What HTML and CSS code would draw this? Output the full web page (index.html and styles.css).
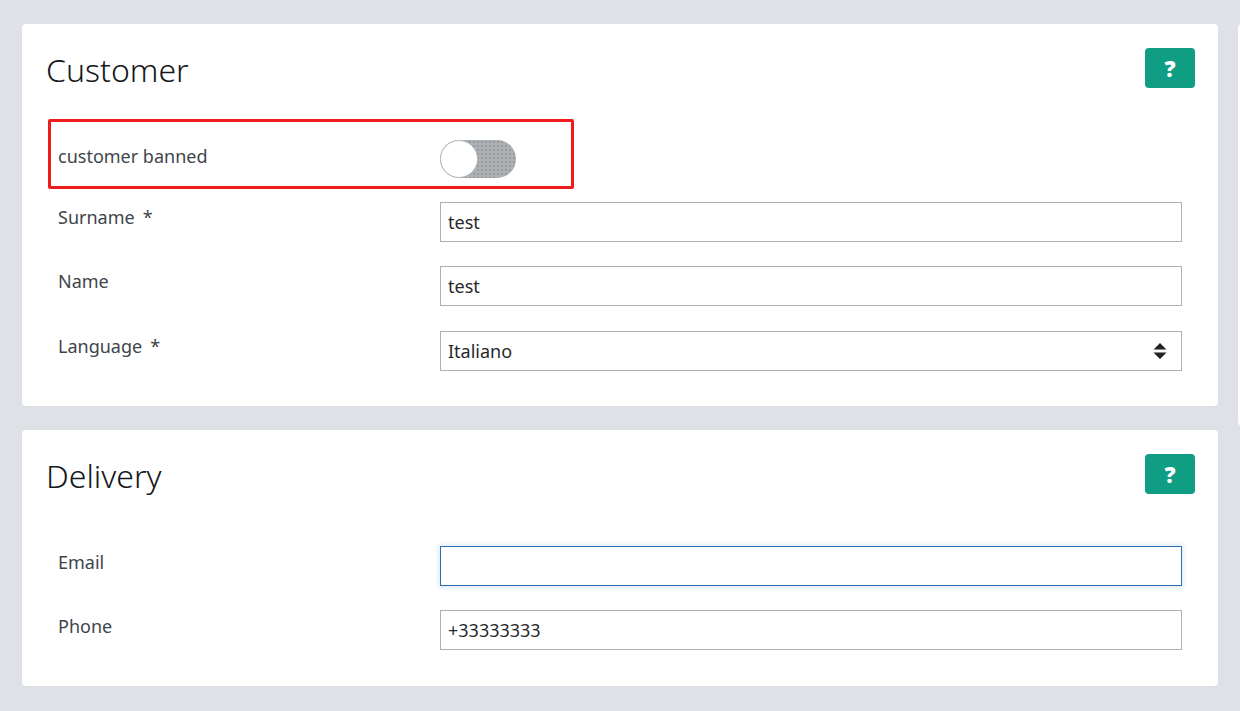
FILE: index.html
```html
<!DOCTYPE html>
<html lang="en">
<head>
<meta charset="utf-8">
<title>Customer</title>
<link rel="stylesheet" href="styles.css">
</head>
<body>
<div class="page">
  <main class="main">
    <section class="card card-customer">
      <header class="card-head">
        <h2>Customer</h2>
        <button class="help" type="button">?</button>
      </header>
      <div class="row row-banned">
        <span class="frame"></span>
        <label>customer banned</label>
        <div class="toggle"><span class="knob"></span></div>
      </div>
      <div class="row"><label>Surname<span class="star">*</span></label><div class="input">test</div></div>
      <div class="row"><label>Name</label><div class="input">test</div></div>
      <div class="row"><label>Language<span class="star">*</span></label>
        <div class="input select">Italiano
          <svg class="updown" viewBox="0 0 14 18" width="14" height="18"><path d="M7 1 L13.5 7.6 H0.5 Z M0.5 10.4 H13.5 L7 17 Z" fill="#222"/></svg>
        </div>
      </div>
    </section>
    <section class="card card-delivery">
      <header class="card-head">
        <h2>Delivery</h2>
        <button class="help" type="button">?</button>
      </header>
      <div class="row"><label>Email</label><div class="input focus"></div></div>
      <div class="row"><label>Phone</label><div class="input">+33333333</div></div>
    </section>
  </main>
  <aside class="side"></aside>
</div>
</body>
</html>
```
FILE: styles.css
```css
* { box-sizing: border-box; }
html, body { margin: 0; height: 100%; }
body {
  background: #dee2e6;
  color: #212529;
  font-family: "Noto Sans", "Open Sans", sans-serif;
  overflow: hidden;
}
.page { display: flex; gap: 20px; padding: 24px 0 0 22px; width: 1240px; height: 711px; overflow: hidden; }
.main { flex: 0 0 1196px; display: flex; flex-direction: column; gap: 24px; }
.side { flex: 0 0 100px; height: 402px; background: #fff; border-radius: 4px; }
.card { background: #fff; border-radius: 4px; padding: 24px; }
.card-customer { height: 382px; }
.card-delivery { height: 256px; }
.card-head { display: flex; justify-content: space-between; align-items: flex-start; height: 40px; }
.card-head h2 { margin: -1px 0 0 0; font-size: 32px; font-weight: 300; line-height: 46px; color: #14181b; }
.help {
  width: 50px; height: 40px; border: 0; border-radius: 4px; padding: 0; margin-right: -1px;
  background: #0f9d84; color: #fff;
  font: 900 22px/40px "Noto Sans", sans-serif;
}
.row {
  display: grid; grid-template-columns: 382px 1fr;
  padding: 0 12px; margin-bottom: 24.3px; position: relative;
}
.card-customer .card-head { margin-bottom: 31px; }
.card-delivery .card-head { margin-bottom: 52px; }
.row label { font-size: 18px; line-height: 30px; color: #3f454b; }
.star { margin-left: 8px; }
.card-delivery .row label { padding-top: 1px; }
.row-banned { height: 70px; padding-top: 10px; align-items: center; margin-bottom: 13px; }
.row-banned label { position: relative; top: -3px; }
.frame {
  position: absolute; left: 2px; top: 0; width: 526px; height: 70px;
  border: 3px solid #ee1c1c; border-radius: 2px; pointer-events: none;
}
.toggle {
  grid-column: 2; width: 76px; height: 38px; border-radius: 19px;
  background-color: #aeb1b4;
  background-image: radial-gradient(#96999d 0.8px, transparent 1px);
  background-size: 4px 4px;
  position: relative;
}
.knob {
  position: absolute; left: 0; top: 0; width: 38px; height: 38px; border-radius: 50%;
  background: #fff; border: 1.5px solid #b9bcbf;
}
.input {
  height: 40px; border: 1px solid #aeb0b2; background: #fff;
  font-size: 18px; line-height: 38px; padding: 0 7px; color: #26292c;
  display: flex; justify-content: space-between; align-items: center;
}
.input.focus { border-color: #2a6fb0; box-shadow: 0 0 4px 2px #e3eefb; }
.select { padding-right: 14px; }
```
